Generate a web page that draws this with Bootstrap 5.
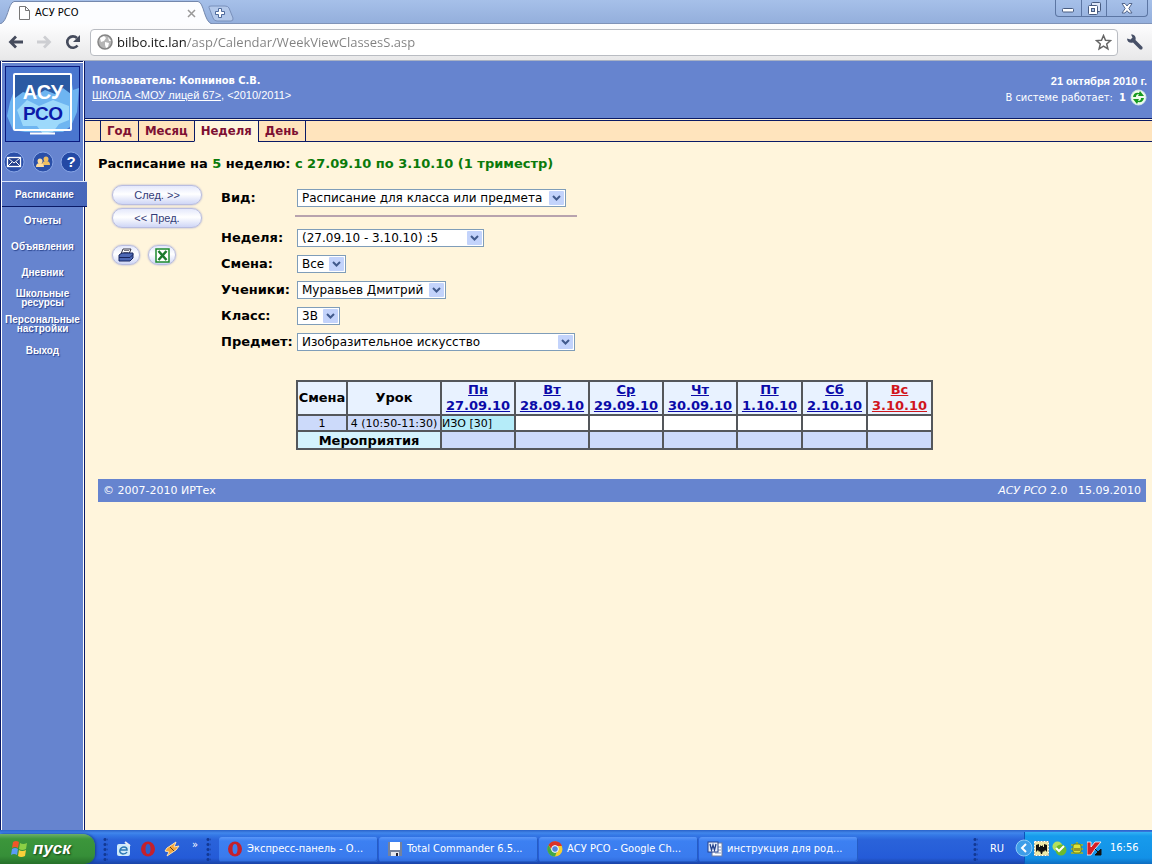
<!DOCTYPE html>
<html lang="ru">
<head>
<meta charset="utf-8">
<meta name="viewport" content="width=device-width, initial-scale=1">
<title>АСУ РСО</title>
<link href="https://cdn.jsdelivr.net/npm/bootstrap@5.3.0/dist/css/bootstrap.min.css" rel="stylesheet">
<style>
:root{--navy:#0a1a66;--blue:#6684cf;--cream:#fff5dc;--verdana:"DejaVu Sans",sans-serif;--tahoma:"DejaVu Sans Condensed","DejaVu Sans",sans-serif}
body{font:13px/16px var(--verdana);color:#000;background:var(--cream)}
svg{display:block;flex:none}
button{font:inherit}
/* browser frame */
.tabstrip{height:24px;background:linear-gradient(#a6c0e9,#94afdc);border-bottom:1px solid #7f93b8}
.btab{width:208px;height:24px;font:11px/14px var(--tahoma);padding:2px 12px 0 18px;z-index:1}
.btab>svg.shape{position:absolute;left:0;top:0;z-index:-1}
.ghost{border:0;background:none;padding:0;color:inherit}
.wbtns{height:17px;border:1px solid #5c76a3;border-top:0;border-radius:0 0 4px 4px;margin-right:4px}
.wbtns button{border:0;background:none;padding:0;width:25px;display:flex;justify-content:center;align-items:center}
.wbtns button+button{border-left:1px solid #5c76a3}
.wbtns button:last-child{width:41px}
.toolbar{height:37px;background:linear-gradient(#fdfdfe,#e8e8e9);border-bottom:1px solid #a9b2c4;padding:0 8px}
.urlbox{height:27px;border:1px solid #b9bcc2;border-radius:4px;background:#fff;padding:0 5px 0 6px}
.urlbox input{border:0;outline:0;padding:0;font:13px/20px "Open Sans",sans-serif;color:#666;min-width:0;
 background:linear-gradient(90deg,#111 70px,#808080 70px);-webkit-background-clip:text;background-clip:text;-webkit-text-fill-color:transparent}
/* sidebar */
.side{width:85px;background:var(--blue);border-left:1px solid var(--navy);border-right:1px solid var(--navy);box-shadow:inset 1px 0 #fff,inset -1px 0 #fff,inset 0 1px var(--navy),inset 0 2px #fff}
.logo{margin:5px 4px 0;height:76px}
.round{padding:0 2px;margin-top:9px}
.menu a{height:26px;display:flex;align-items:center;justify-content:center;text-align:center;color:#fff;text-decoration:none;font:bold 10px/9px "Liberation Sans",sans-serif;text-shadow:1px 1px 1px #2b4691}
.menu a.now{width:85px;margin-left:1px;background:linear-gradient(90deg,#5775c5,#4767ba);border-top:1px solid #dce5fb;border-bottom:1px solid var(--navy);position:relative;z-index:1}
/* page header */
.band{height:58px;background:var(--blue);color:#fff;font:11px/14px var(--tahoma);border-bottom:1px solid var(--navy);padding:13px 5px 0 7px}
.band a{color:#fff}
.arial{font-family:"Liberation Sans",sans-serif}
.tabs{margin-top:1px;height:22px;background:#ffe4bd;border-top:1px solid var(--navy);border-bottom:1px solid var(--navy);padding-left:15px}
.tabs a{height:21px;border-left:1px solid var(--navy);border-bottom:1px solid var(--navy);padding:0 6px;color:#7d1033;font:bold 13px/19px "DejaVu Sans Condensed",sans-serif;text-decoration:none;text-align:center}
.tabs a:last-child{border-right:1px solid var(--navy)}
.tabs a.now{background:var(--cream);border-bottom-color:var(--cream)}
.view{padding:14px 6px 0 13px}
h1{font:bold 13px/16px var(--verdana);margin:0}
.green{color:#0a7a0a}
.panel{margin:13px 0 0 14px}
.pill{height:20px;width:90px;border:1px solid #b9bde0;border-radius:10px;background:linear-gradient(#e4e8fb,#fff 45%,#cfd6f6);color:#333c78;font:11px/16px "Liberation Sans",sans-serif;box-shadow:0 0 2px #9ea3cc;padding:0}
.pill+.pill{margin-top:3px}
.pair{display:flex;gap:8px;margin-top:17px}
.pair .pill{width:28px;margin:0;display:flex;align-items:center;justify-content:center}
.filters{display:grid;grid-template-columns:76px max-content;row-gap:8px;align-items:center;margin:4px 0 0 19px}
.filters label{font-weight:bold;white-space:nowrap}
.filters select{appearance:none;height:18px;border:1px solid #7f9db9;border-radius:0;padding:0 20px 0 4px;font:12px/16px var(--verdana);color:#000;background:#fff url("data:image/svg+xml,%3Csvg xmlns='http://www.w3.org/2000/svg' width='15' height='14'%3E%3Crect width='15' height='14' rx='1' fill='%23c3d3fb'/%3E%3Cpath d='M4 5l3.5 3.5L11 5' fill='none' stroke='%23415a8c' stroke-width='2'/%3E%3C/svg%3E") no-repeat right 1px top 1px}
.filters hr{grid-column:2;margin:0 0 4px -2px;width:282px;border:0;border-top:2px solid #b8a3ae;opacity:1}
.grid5{margin:29px 0 0 198px;width:635px;table-layout:fixed;border-collapse:collapse;text-align:center;white-space:nowrap}
.grid5 th,.grid5 td{border:2px solid #54575b;padding:0;font-size:13px}
.grid5 thead th{height:34px;background:#e8f2ff}
.grid5 td{height:16px;font-size:11px;line-height:13px;background:#fff}
.grid5 .lav{background:#ccdafa}
.grid5 .ev{height:18px;line-height:15px;background:#d4f3fd}
.grid5 a{color:#0a0aa8}
.grid5 .sun a{color:#d0161c}
.foot{margin-top:29px;height:23px;background:var(--blue);color:#fff;font:11px/23px var(--verdana);padding:0 5px}
/* taskbar */
.task{height:34px;background:linear-gradient(#2a62c8,#4187ec 3px,#3579e6 5px,#2a63da 10px,#245bd8 28px,#1a44a6);color:#fff;font:11px/14px var(--tahoma)}
.start{width:95px;height:30px;border:0;border-radius:0 12px 10px 0;background:linear-gradient(#6cae68,#3c963b 5px,#368f38 22px,#26702a);color:#fff;font:italic bold 17px/22px "Liberation Sans",sans-serif;text-shadow:1px 1px 2px #123f14;padding:0 0 0 9px;box-shadow:1px 0 3px #173d8e}
.dots{width:5px;height:24px;background:radial-gradient(circle,#123893 1px,transparent 2px) 0 0/4px 5px}
.tbtn{height:25px;flex:0 1 159px;min-width:0;border:0;border-radius:3px;background:linear-gradient(#5b97f8,#3c80f2 4px,#3a7bee 20px,#306bdc);box-shadow:inset -1px -1px #255cc4;color:#fff;padding:0 8px;font:11px/14px var(--tahoma);text-align:left}
.tray{height:32px;width:128px;background:linear-gradient(#34b3f4,#179bec 4px,#1291e7 26px,#0f6cc0);border-left:1px solid #0c55b8}
.tray .ghost{margin-left:-10px}
.trayicons{gap:3px;margin-left:1px}
</style>
</head>
<body>
<div class="min-vh-100 d-flex flex-column">
<header>
 <div class="tabstrip d-flex">
  <div class="btab position-relative d-flex align-items-center">
   <svg class="shape" width="212" height="24"><path d="M0 24C8 22 8 3 14 1.500H198C204 2 204 22 212 24Z" fill="#fcfdff"/><path d="M0 24C8 22 8 3 14 1.500H198C204 2 204 22 212 24" fill="none" stroke="#7488ad"/></svg>
   <svg width="13" height="14" viewBox="0 0 13 14"><path d="M1.500.5h6l4 4v9h-10zM7.500.5v4h4" fill="#fff" stroke="#777"/></svg>
   <span class="ms-1 flex-grow-1">АСУ РСО</span>
   <button class="ghost" aria-label="Закрыть вкладку"><svg width="9" height="9"><path d="M1 1l7 7M8 1L1 8" stroke="#999" stroke-width="1.500"/></svg></button>
  </div>
  <button class="ghost" aria-label="Новая вкладка"><svg width="26" height="22"><path d="M1 6.500Q0 5 3 5H17Q20 5 21 7L25 17Q25.500 20 23 20H9Q6 20 5 17Z" fill="#b3c8ea" stroke="#7990bb"/><path d="M10.500 7.500h3v3h3v3h-3v3h-3v-3h-3v-3h3z" fill="#fff" stroke="#4f6b9c"/></svg></button>
  <div class="wbtns d-flex ms-auto">
   <button aria-label="Свернуть"><svg width="13" height="9"><rect x=".5" y="4.500" width="11" height="3.500" rx="1" fill="#fff" stroke="#475b80"/></svg></button>
   <button aria-label="Развернуть"><svg width="13" height="13"><rect x="3.500" y=".5" width="9" height="9" rx="1" fill="#dfe8f8" stroke="#475b80"/><rect x=".5" y="3.500" width="9" height="9" rx="1" fill="#fff" stroke="#475b80"/><rect x="3.500" y="6.500" width="3" height="3" fill="#a4bce4" stroke="#475b80"/></svg></button>
   <button aria-label="Закрыть"><svg width="12" height="11"><path d="M1 .5h3L6 3l2-2.500h3L7.800 5.500 11 10H8L6 7.700 4 10H1l3.200-4.500z" fill="#fff" stroke="#53678d"/></svg></button>
  </div>
 </div>
 <div class="toolbar d-flex align-items-center">
  <button class="ghost" aria-label="Назад"><svg width="16" height="14"><path d="M15 7H3M8 1.500L2.500 7 8 12.500" fill="none" stroke="#454b5c" stroke-width="2.800"/></svg></button>
  <button class="ghost ms-2 ps-1" aria-label="Вперёд"><svg width="16" height="14"><path d="M1 7h12M8 1.500L13.500 7 8 12.500" fill="none" stroke="#cdced2" stroke-width="2.800"/></svg></button>
  <button class="ghost ms-2 ps-1" aria-label="Обновить"><svg width="18" height="16"><path d="M13.500 11.500A5.700 5.700 0 1 1 13 4" fill="none" stroke="#454b5c" stroke-width="2.600"/><path d="M16 1v7H9z" fill="#454b5c"/></svg></button>
  <div class="urlbox d-flex align-items-center flex-grow-1 ms-2">
   <svg width="16" height="16"><circle cx="8" cy="8" r="7" fill="#b5b5b5" stroke="#858585" stroke-width="1.500"/><path d="M3 4l4-2 2 2-2 3-3 1zM8 8l4 1-1 4-2 1-1-3zM11 3l3 4-2 0z" fill="#fff"/></svg>
   <input class="flex-grow-1 ms-1" type="text" aria-label="Адрес" value="bilbo.itc.lan/asp/Calendar/WeekViewClassesS.asp">
   <button class="ghost" aria-label="В закладки"><svg width="17" height="17"><path d="M8.500 1.500l2 4.700 5 .4-3.800 3.300 1.200 5-4.400-2.700-4.400 2.700 1.200-5L1.500 6.600l5-.4z" fill="#fff" stroke="#666" stroke-width="1.500"/></svg></button>
  </div>
  <button class="ghost ms-2" aria-label="Настройка"><svg width="18" height="18"><path d="M5 1.500L6.500 4.500 4.500 6.500 1 5.500C1 9 4 10.500 7 9.500L14 16.500Q17 17 16.500 14L9.500 7C10.500 3.500 8 1 5 1.500Z" fill="#475067"/></svg></button>
 </div>
</header>

<div class="d-flex flex-grow-1">
 <aside class="side flex-shrink-0">
  <div class="logo"><svg width="75" height="76"><rect x=".5" y=".5" width="74" height="75" fill="#4a76cf" stroke="#0a1a80"/><path d="M2 50L5 36 10 22 24 12H66L68 24 74 22 72 46 66 60 58 66H20L8 64Z" fill="#6eb5f1"/><path d="M10 8H66V28L58 22 50 28 40 24 30 30 18 26 10 32Z" fill="#2b5aa3"/><path d="M12 44L22 34 34 40 48 34 64 40V54L54 58 48 66 38 68 32 60 18 60Z" fill="#9dd9fb"/><rect x="9" y="8" width="57" height="56" rx="1" fill="none" stroke="#fff" stroke-width="2"/><path d="M25 67.500H50" stroke="#fff" stroke-width="2"/><text x="38" y="33" text-anchor="middle" font-family="Liberation Sans,sans-serif" font-weight="bold" font-size="20" fill="#fff">АСУ</text><text x="38" y="54" text-anchor="middle" font-family="Liberation Sans,sans-serif" font-weight="bold" font-size="19" fill="#0b1aa8">РСО</text></svg></div>
  <div class="round d-flex justify-content-between">
   <a href="#" aria-label="Почта"><svg width="22" height="22"><circle cx="11" cy="11" r="10" fill="#2a4fa8" stroke="#88a5e5"/><rect x="4.500" y="6.500" width="13" height="9" fill="#24408c" stroke="#fff" stroke-width="1.300"/><path d="M5 7l6 5 6-5M5 15l4-4M17 15l-4-4" fill="none" stroke="#fff"/></svg></a>
   <a href="#" aria-label="Пользователи"><svg width="22" height="22"><circle cx="11" cy="11" r="10" fill="#2a4fa8" stroke="#88a5e5"/><circle cx="14" cy="8" r="2.500" fill="#efbf62"/><path d="M10 14q0-4 4-4t4 4z" fill="#efbf62"/><circle cx="8" cy="10" r="2.500" fill="#ffdc9a"/><path d="M4 16q0-4 4-4t4 4z" fill="#ffdc9a"/></svg></a>
   <a href="#" aria-label="Справка"><svg width="22" height="22"><circle cx="11" cy="11" r="10" fill="#2349a5" stroke="#88a5e5"/><text x="11" y="16" text-anchor="middle" font-family="Liberation Sans,sans-serif" font-weight="bold" font-size="15" fill="#fff">?</text></svg></a>
  </div>
  <nav class="menu mt-2">
   <a class="now" href="#">Расписание</a>
   <a href="#">Отчеты</a>
   <a href="#">Объявления</a>
   <a href="#">Дневник</a>
   <a href="#">Школьные<br>ресурсы</a>
   <a href="#">Персональные<br>настройки</a>
   <a href="#">Выход</a>
  </nav>
 </aside>

 <main class="flex-grow-1">
  <div class="band d-flex justify-content-between">
   <div><b>Пользователь: Копнинов С.В.</b><br><span class="arial"><a href="#">ШКОЛА &lt;МОУ лицей 67&gt;</a>, &lt;2010/2011&gt;</span></div>
   <div class="text-end"><b class="arial">21 октября 2010 г.</b>
    <div class="d-flex align-items-center justify-content-end">В системе работает: &nbsp;<b>1</b>
     <button class="ghost ms-1" aria-label="Обновить список"><svg width="17" height="17"><circle cx="8.500" cy="8.500" r="7.500" fill="#eefbea" stroke="#cfe6ee"/><path d="M3 8q1-5 6-4l1-2 4 5H8l1-2q-3 0-3 3zM14 9q-1 5-6 4l-1 2-4-5h6l-1 2q3 0 3-3z" fill="#159a20"/></svg></button></div>
   </div>
  </div>
  <nav class="tabs d-flex"><a href="#">Год</a><a href="#">Месяц</a><a class="now" href="#">Неделя</a><a href="#">День</a></nav>

  <div class="view">
   <h1>Расписание на <span class="green">5</span> неделю: <span class="green">с 27.09.10 по 3.10.10 (1 триместр)</span></h1>
   <form class="panel d-flex">
    <div>
     <button type="button" class="pill d-block">След. &gt;&gt;</button>
     <button type="button" class="pill d-block">&lt;&lt; Пред.</button>
     <div class="pair">
      <button type="button" class="pill" aria-label="Печать"><svg width="16" height="15"><path d="M5 1h8l-2 5H3z" fill="#fff" stroke="#334"/><path d="M6 2.500h5M5.500 4.500h5" stroke="#556" stroke-width=".8"/><path d="M1 7l3-2h11v5l-3 3H1z" fill="#4d68b5" stroke="#17245e"/><path d="M1 9.500h11l3-3" fill="none" stroke="#17245e"/></svg></button>
      <button type="button" class="pill" aria-label="Excel"><svg width="15" height="15"><rect x="1" y="1" width="13" height="13" fill="#fff" stroke="#1c8a2c" stroke-width="1.500"/><path d="M3.500 3l8 9M11.500 3l-8 9" stroke="#1c7a2c" stroke-width="2.500"/></svg></button>
     </div>
    </div>
    <div class="filters">
     <label for="f1">Вид:</label><select id="f1" style="width:269px"><option>Расписание для класса или предмета</option></select>
     <hr>
     <label for="f2">Неделя:</label><select id="f2" style="width:187px"><option>(27.09.10 - 3.10.10) :5</option></select>
     <label for="f3">Смена:</label><select id="f3" style="width:49px"><option>Все</option></select>
     <label for="f4">Ученики:</label><select id="f4" style="width:149px"><option>Муравьев Дмитрий</option></select>
     <label for="f5">Класс:</label><select id="f5" style="width:43px"><option>3В</option></select>
     <label for="f6">Предмет:</label><select id="f6" style="width:278px"><option>Изобразительное искусство</option></select>
    </div>
   </form>
   <table class="grid5">
    <colgroup><col style="width:50px"><col style="width:94px"><col style="width:74px"><col style="width:74px"><col style="width:74px"><col style="width:74px"><col style="width:65px"><col style="width:65px"><col style="width:65px"></colgroup>
    <thead><tr><th>Смена</th><th>Урок</th><th><a href="#">Пн<br>27.09.10</a></th><th><a href="#">Вт<br>28.09.10</a></th><th><a href="#">Ср<br>29.09.10</a></th><th><a href="#">Чт<br>30.09.10</a></th><th><a href="#">Пт<br>1.10.10</a></th><th><a href="#">Сб<br>2.10.10</a></th><th class="sun"><a href="#">Вс<br>3.10.10</a></th></tr></thead>
    <tbody>
     <tr><td class="lav">1</td><td class="lav">4 (10:50-11:30)</td><td class="text-start" style="background:#b5ecf9">ИЗО [30]</td><td></td><td></td><td></td><td></td><td></td><td></td></tr>
     <tr><th class="ev" colspan="2">Мероприятия</th><td class="lav"></td><td class="lav"></td><td class="lav"></td><td class="lav"></td><td class="lav"></td><td class="lav"></td><td class="lav"></td></tr>
    </tbody>
   </table>
   <footer class="foot d-flex justify-content-between"><span>© 2007-2010 ИРТех</span><span><i>АСУ РСО</i> 2.0 &nbsp; 15.09.2010</span></footer>
  </div>
 </main>
</div>

<div class="task d-flex align-items-end">
 <button class="start d-flex align-items-center"><svg width="20" height="20" class="me-1"><path d="M4 3q3-2 6 0L9 9q-3-2-6 0z" fill="#f0562a"/><path d="M11 4q3 2 7 0l-1 6q-4 2-7 0z" fill="#8cd045"/><path d="M3 10q3-2 6 0l-1 6q-3-2-6 0z" fill="#5b9cf5"/><path d="M10 11q3 2 7 0l-1 6q-4 2-7 0z" fill="#fbd03a"/></svg>пуск</button>
 <div class="d-flex align-items-center h-100 ps-2 flex-grow-1 pt-1 overflow-hidden">
  <span class="dots me-2"></span>
  <button class="ghost" aria-label="Internet Explorer"><svg width="16" height="16"><rect x="1" y="3" width="13" height="12" rx="2" fill="#cfeafa"/><path d="M4 9h7q0-3-3-3T4 9t3 4q3 0 4-2" fill="none" stroke="#2b79b5" stroke-width="1.500"/><path d="M9 1l5 4" stroke="#e8edf2" stroke-width="2"/></svg></button>
  <button class="ghost ms-2" aria-label="Opera"><svg width="16" height="16"><ellipse cx="8" cy="8" rx="7" ry="7.500" fill="#c4202c"/><ellipse cx="8" cy="8" rx="2.500" ry="5" fill="#2a5fd0"/></svg></button>
  <button class="ghost ms-2" aria-label="Winamp"><svg width="16" height="16"><path d="M12 1L3 7l-2 3 4 1-2 4 9-6 3-4-5 1z" fill="#f4a63a" stroke="#fbe2b3"/><path d="M6 6l4 4" stroke="#5b4020"/></svg></button>
  <span class="ms-2 ps-1 align-self-start pt-1">»</span>
  <span class="dots ms-2 me-1"></span>
  <div class="d-flex flex-grow-1 ps-1" style="gap:1px">
   <button class="tbtn d-flex align-items-center"><svg width="16" height="16" class="me-1"><ellipse cx="8" cy="8" rx="7" ry="7.500" fill="#c4202c"/><ellipse cx="8" cy="8" rx="2.500" ry="5" fill="#3c7eef"/></svg><span class="text-nowrap">Экспресс-панель - О...</span></button>
   <button class="tbtn d-flex align-items-center"><svg width="16" height="16" class="me-1"><rect x="1" y="1" width="14" height="14" fill="#75829c"/><rect x="3" y="1" width="10" height="8" fill="#fff"/><rect x="4" y="11" width="8" height="4" fill="#e4e6ec"/><rect x="9" y="12" width="2" height="3" fill="#223"/></svg><span class="text-nowrap">Total Commander 6.5...</span></button>
   <button class="tbtn d-flex align-items-center"><svg width="16" height="16" class="me-1"><circle cx="8" cy="8" r="7.500" fill="#f5cf30"/><path d="M1.500 4A7.500 7.500 0 0 1 15 5H8L5 9z" fill="#db3328"/><path d="M1.500 4A7.500 7.500 0 0 0 8 15.500L10 10H5z" fill="#41a748"/><circle cx="8" cy="8" r="3.400" fill="#4d86e0" stroke="#fff"/></svg><span class="text-nowrap">АСУ РСО - Google Ch...</span></button>
   <button class="tbtn d-flex align-items-center"><svg width="16" height="16" class="me-1"><rect x="5" y="2" width="10" height="13" fill="#fff" stroke="#6a7ca5"/><path d="M8 6h6M8 9h6M8 12h6" stroke="#8899bb"/><rect x="1" y="1" width="10" height="10" fill="#e5edfb" stroke="#24418c"/><path d="M3 3l1.500 6L6 4l1.500 5L9 3" fill="none" stroke="#24418c" stroke-width="1.300"/></svg><span class="text-nowrap">инструкция для род...</span></button>
  </div>
  <span class="dots"></span><span class="ms-2 ps-1 me-3 pe-1">RU</span>
 </div>
 <div class="tray d-flex align-items-center flex-shrink-0">
  <button class="ghost" aria-label="Показать значки"><svg width="18" height="18"><circle cx="9" cy="9" r="8" fill="#3e9de8" stroke="#8ccaf7"/><path d="M11 5L7 9l4 4" fill="none" stroke="#fff" stroke-width="2"/></svg></button>
  <div class="trayicons d-flex align-items-center">
   <svg width="15" height="15"><rect width="15" height="15" fill="#111"/><rect x=".5" y=".5" width="14" height="14" fill="#eee9a8" stroke="#fff" stroke-dasharray="2 1"/><path d="M2 4l3-1v3h1V4l1 1h1l1-1v2h1V3l3 1v7l-2-2-1 2-1-1-1 3H7l-1-3-1 1-1-2-2 2z" fill="#111"/></svg>
   <svg width="15" height="15"><circle cx="5.500" cy="5.500" r="5" fill="#b3df5d"/><circle cx="9" cy="9" r="5.500" fill="#6cba2d"/><path d="M4 7l3 3 5-5" stroke="#fff" stroke-width="2" fill="none"/></svg>
   <svg width="14" height="14"><path d="M7 1v12M1 4h12M1 8h12M1 12h12" stroke="#a9b820" stroke-width="1.500"/><rect x="3" y="3" width="8" height="9" rx="2" fill="#dde23a" stroke="#6f8418"/><path d="M5 7v3M7 7v3M9 7v3" stroke="#574f10"/></svg>
   <svg width="15" height="15"><path d="M0 1h4v5l4-5h6L8 8l-4 6H0z" fill="#d61f26" stroke="#fff" stroke-width=".8"/><path d="M8 8l5 5M14 8v6H8z" fill="#111" stroke="#111"/></svg>
  </div>
  <span class="ms-2">16:56</span>
 </div>
</div>
</div>
<script src="https://cdn.jsdelivr.net/npm/bootstrap@5.3.0/dist/js/bootstrap.bundle.min.js"></script>
</body>
</html>
